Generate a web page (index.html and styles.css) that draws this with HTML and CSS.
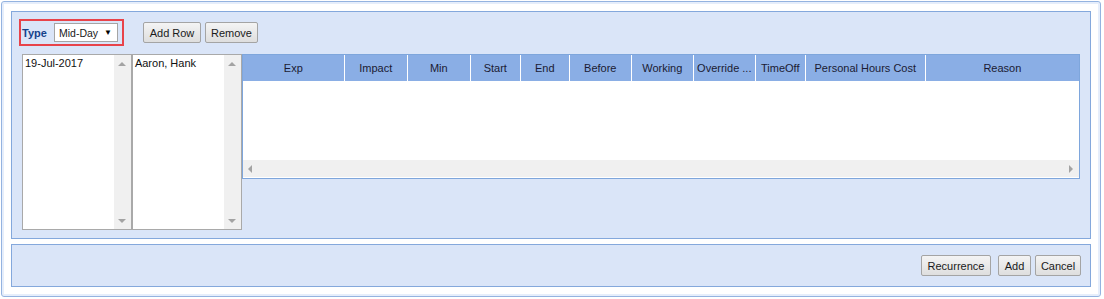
FILE: index.html
```html
<!DOCTYPE html>
<html lang="en">
<head>
    <meta charset="UTF-8">
    <title>Exceptions</title>
    <link rel="stylesheet" href="styles.css">
</head>
<body>
    <div class="frame">
        <div class="panel mainPanel">
            <div class="toolbar">
                <div class="typeBox">
                    <span class="typeLabel">Type</span>
                    <div class="typeSelect">
                        <span>Mid-Day</span>
                        <span class="caret">&#9660;</span>
                    </div>
                </div>
                <button class="btn btnAddRow">Add Row</button>
                <button class="btn btnRemove">Remove</button>
            </div>
            <div class="body">
                <div class="listBox">
                    <div class="listItems">19-Jul-2017</div>
                    <div class="vScroll">
                        <span class="arrow up"></span>
                        <span class="arrow down"></span>
                    </div>
                </div>
                <div class="listBox">
                    <div class="listItems">Aaron, Hank</div>
                    <div class="vScroll">
                        <span class="arrow up"></span>
                        <span class="arrow down"></span>
                    </div>
                </div>
                <div class="grid">
                    <div class="gridHeader">
                        <div class="col colExp">Exp</div>
                        <div class="col colImpact">Impact</div>
                        <div class="col colMin">Min</div>
                        <div class="col colStart">Start</div>
                        <div class="col colEnd">End</div>
                        <div class="col colBefore">Before</div>
                        <div class="col colWorking">Working</div>
                        <div class="col colOverride">Override ...</div>
                        <div class="col colTimeOff">TimeOff</div>
                        <div class="col colCost">Personal Hours Cost</div>
                        <div class="col colReason">Reason</div>
                    </div>
                    <div class="gridRows"></div>
                    <div class="hScroll">
                        <span class="arrow left"></span>
                        <span class="arrow right"></span>
                    </div>
                </div>
            </div>
        </div>
        <div class="panel footer">
            <button class="btn btnRecurrence">Recurrence</button>
            <button class="btn btnAdd">Add</button>
            <button class="btn btnCancel">Cancel</button>
        </div>
    </div>
</body>
</html>
```

FILE: styles.css
```css
body {
    margin: 0;
    background: #fff;
    font-family: "Liberation Sans", Arial, sans-serif;
    font-size: 11px;
    color: #1a1a1a;
}

.frame {
    margin: 1px;
    width: 1100px;
    height: 296px;
    box-sizing: border-box;
    border: 1px solid #94b3e0;
    border-radius: 3px;
    box-shadow: inset 0 0 0 2px #e6eefb;
    padding: 9px;
    display: flex;
    flex-direction: column;
    gap: 5px;
}

.panel {
    background: #dae5f8;
    border: 1px solid #84a8dc;
    box-sizing: border-box;
}

.mainPanel {
    height: 229px;
    padding: 7px 10px 0 10px;
}

.toolbar {
    display: flex;
    align-items: center;
    margin-left: -3px;
}

.typeBox {
    display: flex;
    align-items: center;
    width: 105px;
    height: 27px;
    box-sizing: border-box;
    border: 2px solid #e8434a;
    padding-left: 1px;
}

.typeLabel {
    font-weight: bold;
    color: #15428b;
    width: 32px;
}

.typeSelect {
    display: flex;
    justify-content: space-between;
    align-items: center;
    width: 64px;
    height: 19px;
    box-sizing: border-box;
    border: 1px solid #a5a5a5;
    background: #fff;
    padding: 0 5px 0 4px;
    font-size: 10.5px;
    white-space: nowrap;
}

.caret {
    font-size: 8px;
    color: #000;
}

.btn {
    font-family: inherit;
    font-size: 11px;
    color: #1a1a1a;
    height: 21px;
    padding: 0;
    border: 1px solid #a4a4a4;
    border-radius: 2px;
    background: linear-gradient(#f4f4f4, #dedede);
}

.btnAddRow { width: 58px; margin-left: 19px; }
.btnRemove { width: 53px; margin-left: 4px; }
.btnRecurrence { width: 70px; }
.btnAdd { width: 33px; margin-left: 3px; }
.btnCancel { width: 46px; }

.body {
    display: flex;
    margin-top: 8px;
}

.listBox {
    display: flex;
    width: 110px;
    height: 176px;
    box-sizing: border-box;
    border: 1px solid #a9a9a9;
    background: #fff;
}

.listItems {
    flex: 1;
    padding: 2px 2px;
    color: #111;
}

.vScroll {
    width: 17px;
    background: #f0f0f0;
    display: flex;
    flex-direction: column;
    justify-content: space-between;
    align-items: center;
    padding: 7px 0 6px;
}

.arrow {
    width: 0;
    height: 0;
    border: 4px solid transparent;
}

.arrow.up {
    border-bottom-color: #a3a3a3;
    border-top-width: 0;
}

.arrow.down {
    border-top-color: #a3a3a3;
    border-bottom-width: 0;
}

.arrow.left {
    border-right-color: #a3a3a3;
    border-left-width: 0;
}

.arrow.right {
    border-left-color: #a3a3a3;
    border-right-width: 0;
}

.grid {
    width: 839px;
    height: 125px;
    box-sizing: border-box;
    border: 1px solid #7ea6dc;
    background: #fff;
    display: flex;
    flex-direction: column;
}

.gridHeader {
    display: flex;
    height: 26px;
    background: #8aaee5;
}

.col {
    box-sizing: border-box;
    border-right: 1px solid #fff;
    display: flex;
    align-items: center;
    justify-content: center;
    color: #1b1b33;
    white-space: nowrap;
}

.colExp { width: 102px; }
.colImpact { width: 63px; }
.colMin { width: 63px; }
.colStart { width: 50px; }
.colEnd { width: 49px; }
.colBefore { width: 62px; }
.colWorking { width: 62px; }
.colOverride { width: 62px; }
.colTimeOff { width: 50px; }
.colCost { width: 120px; }
.colReason { flex: 1; border-right: none; }

.gridRows {
    flex: 1;
}

.hScroll {
    height: 17px;
    margin-bottom: 1px;
    background: #f0f0f0;
    display: flex;
    justify-content: space-between;
    align-items: center;
    padding: 0 6px 0 5px;
}

.footer {
    height: 43px;
    display: flex;
    justify-content: flex-end;
    align-items: center;
    gap: 4px;
    padding-right: 9px;
}
```
